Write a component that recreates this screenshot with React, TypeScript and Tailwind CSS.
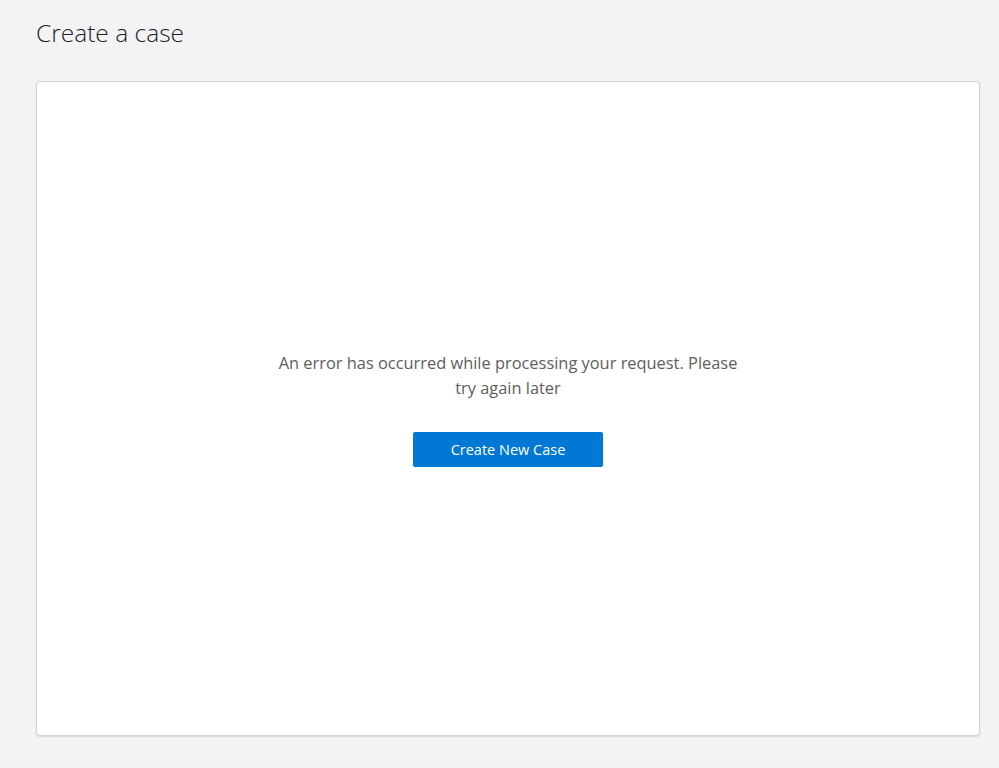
import React from 'react';

const App: React.FC = () => {
  return (
    <div className="min-h-screen w-full bg-[#f3f2f4] font-['Open_Sans',sans-serif]">
      <div className="pl-[36px] pr-[19px] pt-[16px] pb-[32px]">
        <h1 className="text-[24.5px] leading-[34px] font-light text-[#201f1e]">Create a case</h1>

        <div className="mt-[31px] h-[655px] bg-white border border-[#d2d2d2] rounded-[4px] shadow-[0_1px_2px_rgba(0,0,0,0.12)] flex flex-col items-center justify-center">
          <p className="w-[470px] text-center text-[16.4px] leading-[25px] text-[#605e5c]">
            An error has occurred while processing your request. Please try again later
          </p>
          <button
            type="button"
            className="mt-[32px] w-[190px] h-[35px] bg-[#0078d4] hover:bg-[#106ebe] text-white text-[14.5px] rounded-[2px]"
          >
            Create New Case
          </button>
        </div>
      </div>
    </div>
  );
};

export default App;
